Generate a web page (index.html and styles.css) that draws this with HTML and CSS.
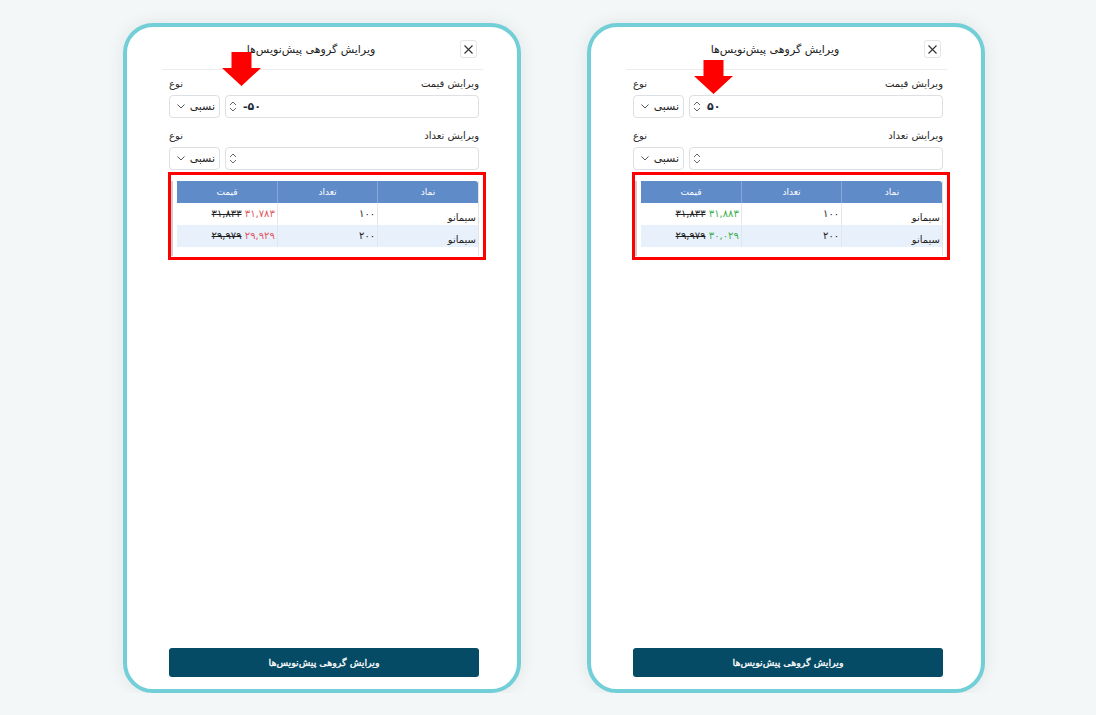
FILE: index.html
```html
<!DOCTYPE html>
<html lang="fa">
<head>
    <meta charset="UTF-8">
    <meta name="viewport" content="width=device-width, initial-scale=1.0">
    <title>ویرایش گروهی پیش‌نویس‌ها</title>
    <link rel="stylesheet" href="styles.css">
</head>
<body>

<div class="stage">

    <!-- decrease: -50 -->
    <div class="phone" dir="rtl">
        <svg class="arrow arrow-minus" width="39" height="34" viewBox="0 0 39 34"><polygon points="9.5,0 29.5,0 29.5,16 39,16 19.5,34 0,16 9.5,16" fill="#ff0000"/></svg>

        <div class="modal-head">
            <button class="close-btn"><svg width="9" height="9" viewBox="0 0 9 9"><path d="M0.5 0.5 L8.5 8.5 M8.5 0.5 L0.5 8.5" stroke="#333" stroke-width="1.1"/></svg></button>
            <span class="modal-title">ویرایش گروهی پیش‌نویس‌ها</span>
        </div>

        <div class="form">
            <div class="label-row"><span>ویرایش قیمت</span><span>نوع</span></div>
            <div class="input-row">
                <div class="num-input">
                    <svg class="spin" width="8" height="13" viewBox="0 0 8 13"><path d="M1 5 L4 2 L7 5 M1 8 L4 11 L7 8" fill="none" stroke="#666" stroke-width="1"/></svg>
                    <span class="num-value" dir="ltr">-۵۰</span>
                </div>
                <div class="select-box"><span>نسبی</span><svg width="8" height="5" viewBox="0 0 8 5"><path d="M0.5 0.5 L4 4 L7.5 0.5" fill="none" stroke="#555" stroke-width="1"/></svg></div>
            </div>

            <div class="label-row"><span>ویرایش تعداد</span><span>نوع</span></div>
            <div class="input-row">
                <div class="num-input">
                    <svg class="spin" width="8" height="13" viewBox="0 0 8 13"><path d="M1 5 L4 2 L7 5 M1 8 L4 11 L7 8" fill="none" stroke="#666" stroke-width="1"/></svg>
                </div>
                <div class="select-box"><span>نسبی</span><svg width="8" height="5" viewBox="0 0 8 5"><path d="M0.5 0.5 L4 4 L7.5 0.5" fill="none" stroke="#555" stroke-width="1"/></svg></div>
            </div>
        </div>

        <div class="mark-box">
            <div class="table-wrap">
                <table class="orders">
                    <thead>
                        <tr><th>نماد</th><th>تعداد</th><th>قیمت</th></tr>
                    </thead>
                    <tbody>
                        <tr>
                            <td class="sym">سیمانو</td>
                            <td>۱۰۰</td>
                            <td><span class="new down">۳۱,۷۸۳</span> <span class="old">۳۱,۸۳۳</span></td>
                        </tr>
                        <tr class="alt">
                            <td class="sym">سیمانو</td>
                            <td>۲۰۰</td>
                            <td><span class="new down">۲۹,۹۲۹</span> <span class="old">۲۹,۹۷۹</span></td>
                        </tr>
                    </tbody>
                </table>
            </div>
        </div>

        <div class="spacer"></div>
        <button class="submit-btn">ویرایش گروهی پیش‌نویس‌ها</button>
    </div>

    <!-- increase: +50 -->
    <div class="phone" dir="rtl">
        <svg class="arrow arrow-plus" width="39" height="34" viewBox="0 0 39 34"><polygon points="9.5,0 29.5,0 29.5,16 39,16 19.5,34 0,16 9.5,16" fill="#ff0000"/></svg>

        <div class="modal-head">
            <button class="close-btn"><svg width="9" height="9" viewBox="0 0 9 9"><path d="M0.5 0.5 L8.5 8.5 M8.5 0.5 L0.5 8.5" stroke="#333" stroke-width="1.1"/></svg></button>
            <span class="modal-title">ویرایش گروهی پیش‌نویس‌ها</span>
        </div>

        <div class="form">
            <div class="label-row"><span>ویرایش قیمت</span><span>نوع</span></div>
            <div class="input-row">
                <div class="num-input">
                    <svg class="spin" width="8" height="13" viewBox="0 0 8 13"><path d="M1 5 L4 2 L7 5 M1 8 L4 11 L7 8" fill="none" stroke="#666" stroke-width="1"/></svg>
                    <span class="num-value" dir="ltr">۵۰</span>
                </div>
                <div class="select-box"><span>نسبی</span><svg width="8" height="5" viewBox="0 0 8 5"><path d="M0.5 0.5 L4 4 L7.5 0.5" fill="none" stroke="#555" stroke-width="1"/></svg></div>
            </div>

            <div class="label-row"><span>ویرایش تعداد</span><span>نوع</span></div>
            <div class="input-row">
                <div class="num-input">
                    <svg class="spin" width="8" height="13" viewBox="0 0 8 13"><path d="M1 5 L4 2 L7 5 M1 8 L4 11 L7 8" fill="none" stroke="#666" stroke-width="1"/></svg>
                </div>
                <div class="select-box"><span>نسبی</span><svg width="8" height="5" viewBox="0 0 8 5"><path d="M0.5 0.5 L4 4 L7.5 0.5" fill="none" stroke="#555" stroke-width="1"/></svg></div>
            </div>
        </div>

        <div class="mark-box">
            <div class="table-wrap">
                <table class="orders">
                    <thead>
                        <tr><th>نماد</th><th>تعداد</th><th>قیمت</th></tr>
                    </thead>
                    <tbody>
                        <tr>
                            <td class="sym">سیمانو</td>
                            <td>۱۰۰</td>
                            <td><span class="new up">۳۱,۸۸۳</span> <span class="old">۳۱,۸۳۳</span></td>
                        </tr>
                        <tr class="alt">
                            <td class="sym">سیمانو</td>
                            <td>۲۰۰</td>
                            <td><span class="new up">۳۰,۰۲۹</span> <span class="old">۲۹,۹۷۹</span></td>
                        </tr>
                    </tbody>
                </table>
            </div>
        </div>

        <div class="spacer"></div>
        <button class="submit-btn">ویرایش گروهی پیش‌نویس‌ها</button>
    </div>

</div>

</body>
</html>
```

FILE: styles.css
```css
body {
    margin: 0;
    background-color: #f3f7f7;
    font-family: "DejaVu Sans", sans-serif;
    color: #222;
}
.stage {
    display: flex;
    gap: 66px;
    padding: 23px 0 0 123px;
}
.phone {
    position: relative;
    box-sizing: border-box;
    width: 398px;
    height: 670px;
    border: 4px solid #72cfd7;
    border-radius: 30px;
    background: white;
    box-shadow: 0 0 18px rgba(0, 0, 0, 0.08);
    padding-top: 13px;
    display: flex;
    flex-direction: column;
}
.arrow {
    position: absolute;
}
.arrow-minus {
    left: 95px;
    top: 25px;
}
.arrow-plus {
    left: 103px;
    top: 33px;
}
.modal-head {
    display: flex;
    align-items: center;
    height: 18px;
    margin: 0 34px 0 35px;
    padding: 0 6px 11px 0;
    border-bottom: 1px solid #ececec;
}
.close-btn {
    width: 17px;
    height: 18px;
    padding: 0;
    border: 1px solid #e3e5e8;
    border-radius: 3px;
    background: white;
    display: flex;
    align-items: center;
    justify-content: center;
}
.modal-title {
    flex: 1;
    text-align: center;
    font-size: 11px;
    color: #1c1c1c;
}
.form {
    margin: 7px 38px 0 42px;
}
.label-row {
    display: flex;
    justify-content: space-between;
    font-size: 10px;
    line-height: 14px;
    height: 14px;
    margin-bottom: 4px;
    color: #2a2a2a;
}
.input-row {
    display: flex;
    gap: 5px;
    height: 23px;
    margin-bottom: 11px;
}
.input-row:last-child {
    margin-bottom: 2px;
}
.num-input {
    flex: 1;
    box-sizing: border-box;
    border: 1px solid #dcdfe4;
    border-radius: 4px;
    display: flex;
    direction: ltr;
    align-items: center;
    gap: 6px;
    padding-left: 3px;
}
.num-value {
    font-size: 11px;
    font-weight: bold;
    color: #1e2b3a;
}
.select-box {
    width: 51px;
    box-sizing: border-box;
    border: 1px solid #dcdfe4;
    border-radius: 4px;
    display: flex;
    align-items: center;
    justify-content: space-between;
    padding: 0 4px 0 7px;
    font-size: 11px;
    color: #1c1c1c;
}
.mark-box {
    box-sizing: border-box;
    height: 88px;
    margin: 0 31px 0 41px;
    border: 3px solid #ff0000;
    padding: 6px 4px 1px 0;
}
.table-wrap {
    box-sizing: border-box;
    height: 75px;
    border-left: 2px solid #cfcfcf;
    border-right: 1px solid #e4e4e4;
    padding-left: 4px;
}
.orders {
    width: 100%;
    border-collapse: collapse;
    table-layout: fixed;
}
.orders th {
    height: 22px;
    padding: 0;
    background-color: #5f8bc9;
    color: white;
    font-size: 9px;
    font-weight: normal;
    border-left: 1px solid #86a8d8;
}
.orders th:first-child {
    border-top-right-radius: 3px;
}
.orders th:last-child {
    border-left: none;
}
.orders td {
    height: 21px;
    padding: 0 2px;
    line-height: 12px;
    font-size: 10px;
    text-align: right;
    vertical-align: middle;
    border-left: 1px solid #e6e6e6;
    white-space: nowrap;
}
.orders td:last-child {
    border-left: none;
}
.orders td.sym {
    vertical-align: bottom;
    padding-bottom: 1px;
}
.orders tr.alt td {
    background-color: #e8f1fb;
}
.new.down {
    color: #e2565f;
}
.new.up {
    color: #3daf4f;
}
.old {
    text-decoration: line-through;
    color: #222;
}
.spacer {
    flex: 1;
}
.submit-btn {
    height: 29px;
    margin: 0 38px 12px 42px;
    border: none;
    border-radius: 3px;
    background-color: #054b66;
    color: white;
    font-family: "DejaVu Sans", sans-serif;
    font-size: 9.5px;
    font-weight: normal;
    -webkit-text-stroke: 0.3px white;
}
```
